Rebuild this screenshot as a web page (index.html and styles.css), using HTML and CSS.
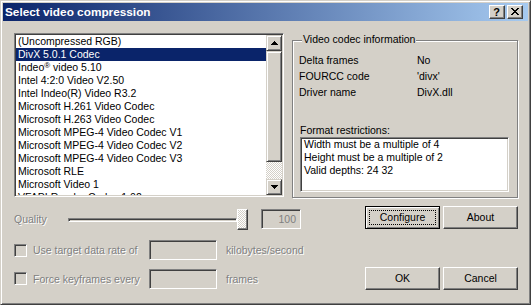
FILE: index.html
```html
<!DOCTYPE html>
<html>
<head>
<meta charset="utf-8">
<title>Select video compression</title>
<link rel="stylesheet" href="styles.css">
</head>
<body>
<div class="window">
  <div class="titlebar">
    <span class="title">Select video compression</span>
    <div class="caption-btns">
      <div class="cbtn help">?</div>
      <div class="cbtn close">
        <svg width="8" height="7" viewBox="0 0 8 7" shape-rendering="crispEdges"><path d="M0 0h2v1H0zM6 0h2v1H6zM1 1h2v1H1zM5 1h2v1H5zM2 2h4v1H2zM3 3h2v1H3zM2 4h4v1H2zM1 5h2v1H1zM5 5h2v1H5zM0 6h2v1H0zM6 6h2v1H6z" fill="#000"/></svg>
      </div>
    </div>
  </div>
  <div class="body">
    <div class="row top-row">
      <div class="listbox">
        <div class="items">
          <div class="item">(Uncompressed RGB)</div>
          <div class="item sel">DivX 5.0.1 Codec</div>
          <div class="item">Indeo<sup class="reg">®</sup> video 5.10</div>
          <div class="item">Intel 4:2:0 Video V2.50</div>
          <div class="item">Intel Indeo(R) Video R3.2</div>
          <div class="item">Microsoft H.261 Video Codec</div>
          <div class="item">Microsoft H.263 Video Codec</div>
          <div class="item">Microsoft MPEG-4 Video Codec V1</div>
          <div class="item">Microsoft MPEG-4 Video Codec V2</div>
          <div class="item">Microsoft MPEG-4 Video Codec V3</div>
          <div class="item">Microsoft RLE</div>
          <div class="item">Microsoft Video 1</div>
          <div class="item">VFAPI Reader Codec 1.02</div>
        </div>
        <div class="vscroll">
          <div class="sbtn"><svg width="7" height="4" viewBox="0 0 7 4" shape-rendering="crispEdges"><path d="M3 0h1v1H3zM2 1h3v1H2zM1 2h5v1H1zM0 3h7v1H0z" fill="#000"/></svg></div>
          <div class="sthumb"></div>
          <div class="strack"></div>
          <div class="sbtn"><svg width="7" height="4" viewBox="0 0 7 4" shape-rendering="crispEdges"><path d="M0 0h7v1H0zM1 1h5v1H1zM2 2h3v1H2zM3 3h1v1H3z" fill="#000"/></svg></div>
        </div>
      </div>
      <div class="group">
        <div class="group-title">Video codec information</div>
        <div class="info">
          <span>Delta frames</span><span>No</span>
          <span>FOURCC code</span><span>'divx'</span>
          <span>Driver name</span><span>DivX.dll</span>
        </div>
        <div class="fr-label">Format restrictions:</div>
        <div class="fr-box">
          <div>Width must be a multiple of 4</div>
          <div>Height must be a multiple of 2</div>
          <div>Valid depths: 24 32</div>
        </div>
      </div>
    </div>
    <div class="row quality-row">
      <span class="dis q-label">Quality</span>
      <div class="slider"><div class="track"></div><div class="thumb"></div></div>
      <div class="edit q-edit">100</div>
      <div class="btns">
        <div class="btn default"><span class="focus">Configure</span></div>
        <div class="btn">About</div>
      </div>
    </div>
    <div class="row check-row r1">
      <div class="checkbox"></div>
      <span class="dis c-label">Use target data rate of</span>
      <div class="edit c-edit"></div>
      <span class="dis unit">kilobytes/second</span>
    </div>
    <div class="row check-row r2">
      <div class="checkbox"></div>
      <span class="dis c-label">Force keyframes every</span>
      <div class="edit c-edit"></div>
      <span class="dis unit">frames</span>
      <div class="btns">
        <div class="btn">OK</div>
        <div class="btn">Cancel</div>
      </div>
    </div>
  </div>
</div>
</body>
</html>
```

FILE: styles.css
```css
* { box-sizing: border-box; }
html, body { margin: 0; padding: 0; }
body {
  width: 531px;
  height: 305px;
  overflow: hidden;
  background: #D4D0C8;
  font-family: "Liberation Sans", Arial, sans-serif;
  font-size: 10.5px;
  color: #000;
}
.window {
  width: 531px;
  height: 305px;
  background: #D4D0C8;
  border: 1px solid;
  border-color: #D4D0C8 #404040 #404040 #D4D0C8;
  box-shadow: inset 1px 1px 0 #fff, inset -1px -1px 0 #808080;
  padding: 2px;
  display: flex;
  flex-direction: column;
}
.titlebar {
  height: 18px;
  flex: none;
  display: flex;
  align-items: center;
  background: linear-gradient(to right, #0A246A, #A6CAF0);
  padding-left: 2px;
}
.title {
  color: #fff;
  font-weight: bold;
  font-size: 11.8px;
  line-height: 18px;
  white-space: nowrap;
}
.caption-btns {
  margin-left: auto;
  display: flex;
  gap: 2px;
  padding-right: 5px;
}
.cbtn {
  width: 16px;
  height: 14px;
  background: #D4D0C8;
  border: 1px solid;
  border-color: #fff #404040 #404040 #fff;
  box-shadow: inset -1px -1px 0 #808080;
  display: flex;
  align-items: center;
  justify-content: center;
}
.help {
  font-weight: bold;
  font-size: 11px;
  line-height: 12px;
  padding-right: 1px;
}
.close svg { display: block; margin-right: 1px; margin-bottom: 1px; }

.body {
  flex: 1;
  padding: 12px 10px 0 11px;
  display: flex;
  flex-direction: column;
}
.row { display: flex; flex: none; }

.top-row { height: 165px; align-items: flex-start; }
.listbox {
  width: 270px;
  height: 164px;
  border: 1px solid;
  border-color: #808080 #fff #fff #808080;
  box-shadow: inset 1px 1px 0 #404040, inset -1px -1px 0 #D4D0C8;
  padding: 1px;
  background: #fff;
  display: flex;
}
.items {
  flex: 1;
  overflow: hidden;
}
.item {
  height: 13px;
  line-height: 13px;
  padding-left: 2px;
  white-space: nowrap;
}
.reg { font-size: 8px; line-height: 0; vertical-align: 3px; }
.item.sel { background: #0A246A; color: #fff; }
.vscroll {
  width: 16px;
  display: flex;
  flex-direction: column;
}
.sbtn, .sthumb {
  background: #D4D0C8;
  border: 1px solid;
  border-color: #D4D0C8 #404040 #404040 #D4D0C8;
  box-shadow: inset 1px 1px 0 #fff, inset -1px -1px 0 #808080;
}
.sbtn {
  height: 16px;
  display: flex;
  align-items: center;
  justify-content: center;
}
.sbtn svg { display: block; }
.sthumb { height: 111px; }
.strack {
  flex: 1;
  background: repeating-conic-gradient(#fff 0 25%, #D4D0C8 0 50%) 0 0 / 2px 2px;
}

.group {
  margin-left: 8px;
  margin-top: 7px;
  width: 226px;
  height: 158px;
  border: 1px solid #808080;
  box-shadow: inset 1px 1px 0 #fff, 1px 1px 0 #fff;
}
.group-title {
  margin: -8px 0 0 9px;
  padding: 0 1px;
  width: fit-content;
  background: #D4D0C8;
  line-height: 13px;
}
.info {
  display: grid;
  grid-template-columns: 118px auto;
  margin-top: 6px;
  padding-left: 6px;
  line-height: 16px;
}
.fr-label {
  margin-top: 24px;
  padding-left: 7px;
  line-height: 13px;
}
.fr-box {
  margin-left: 7px;
  width: 209px;
  height: 55px;
  border: 1px solid;
  border-color: #808080 #fff #fff #808080;
  box-shadow: inset 1px 1px 0 #404040, inset -1px -1px 0 #D4D0C8;
  background: #fff;
  padding: 0 0 0 3px;
  line-height: 13px;
}

.dis { color: #808080; text-shadow: 1px 1px 0 #fff; white-space: nowrap; }

.quality-row { margin-top: 8px; height: 23px; align-items: flex-start; }
.q-label { width: 54px; line-height: 13px; margin-top: 7px; }
.slider {
  width: 180px;
  height: 21px;
  margin-top: 3px;
  display: flex;
  align-items: center;
}
.track {
  flex: 1;
  height: 4px;
  border: 1px solid;
  border-color: #808080 #fff #fff #808080;
  box-shadow: inset 1px 1px 0 #404040;
}
.thumb {
  width: 11px;
  height: 21px;
  border: 1px solid;
  border-color: #fff #404040 #404040 #fff;
  box-shadow: inset -1px -1px 0 #808080;
  background: repeating-conic-gradient(#fff 0 25%, #D4D0C8 0 50%) 0 0 / 2px 2px;
}
.edit {
  height: 20px;
  border: 1px solid;
  border-color: #808080 #fff #fff #808080;
  box-shadow: inset 1px 1px 0 #404040, inset -1px -1px 0 #D4D0C8;
  background: #D4D0C8;
}
.q-edit {
  margin-left: 13px;
  margin-top: 3px;
  width: 40px;
  color: #808080;
  text-align: right;
  padding-right: 4px;
  line-height: 18px;
}
.btns {
  margin-left: auto;
  display: flex;
  gap: 3px;
}
.btn {
  width: 75px;
  height: 23px;
  background: #D4D0C8;
  border: 1px solid;
  border-color: #fff #404040 #404040 #fff;
  box-shadow: inset -1px -1px 0 #808080;
  display: flex;
  align-items: center;
  justify-content: center;
  line-height: 13px;
}
.btn.default {
  border: 1px solid #000;
  box-shadow: inset 1px 1px 0 #fff, inset -1px -1px 0 #808080;
  padding: 3px;
}
.focus {
  flex: 1;
  align-self: stretch;
  border: 1px dotted #000;
  display: flex;
  align-items: center;
  justify-content: center;
}

.check-row { align-items: center; }
.r1 { margin-top: 11px; height: 20px; }
.r2 { margin-top: 7px; height: 23px; }
.checkbox {
  width: 13px;
  height: 13px;
  border: 1px solid;
  border-color: #808080 #fff #fff #808080;
  box-shadow: inset 1px 1px 0 #404040, inset -1px -1px 0 #D4D0C8;
  background: #D4D0C8;
}
.c-label { margin-left: 6px; width: 116px; }
.c-edit { width: 68px; }
.unit { margin-left: 9px; }
```
